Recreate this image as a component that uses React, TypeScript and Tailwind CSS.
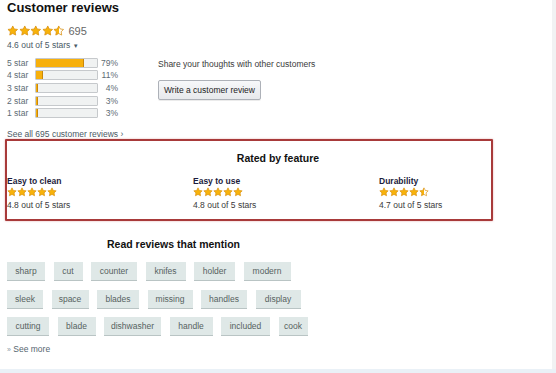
import React, { useId } from "react";

const STAR = "M12 2l3.09 6.26L22 9.27l-5 4.87 1.18 6.88L12 17.77l-6.18 3.25L7 14.14 2 9.27l6.91-1.01L12 2z";

function Star({ fill, size }: { fill: number; size: number }) {
  const id = useId();
  return (
    <svg width={size} height={size} viewBox="0 0 24 24" className="shrink-0">
      <defs>
        <linearGradient id={id} x1="0" x2="1" y1="0" y2="0">
          <stop offset={`${fill * 100}%`} stopColor="#f7b20a" />
          <stop offset={`${fill * 100}%`} stopColor="#ffffff" />
        </linearGradient>
      </defs>
      <path d={STAR} fill={`url(#${id})`} stroke="#d9900e" strokeWidth="1.6" strokeLinejoin="round" />
    </svg>
  );
}

function Stars({ value, size }: { value: number; size: number }) {
  const fills = [0, 1, 2, 3, 4].map((i) => {
    const f = value - i;
    if (f >= 0.75) return 1;
    if (f >= 0.25) return 0.5;
    return 0;
  });
  return (
    <div className="flex items-center">
      {fills.map((f, i) => (
        <Star key={i} fill={f} size={size} />
      ))}
    </div>
  );
}

const hist = [
  { label: "5 star", pct: 79 },
  { label: "4 star", pct: 11 },
  { label: "3 star", pct: 4 },
  { label: "2 star", pct: 3 },
  { label: "1 star", pct: 3 },
];

const chipRows: { t: string; w: string }[][] = [
  [
    { t: "sharp", w: "w-[38px]" },
    { t: "cut", w: "w-[29px]" },
    { t: "counter", w: "w-[46px]" },
    { t: "knifes", w: "w-[40px]" },
    { t: "holder", w: "w-[41px]" },
    { t: "modern", w: "w-[47px]" },
  ],
  [
    { t: "sleek", w: "w-[36px]" },
    { t: "space", w: "w-[37px]" },
    { t: "blades", w: "w-[42px]" },
    { t: "missing", w: "w-[45px]" },
    { t: "handles", w: "w-[46px]" },
    { t: "display", w: "w-[45px]" },
  ],
  [
    { t: "cutting", w: "w-[42px]" },
    { t: "blade", w: "w-[38px]" },
    { t: "dishwasher", w: "w-[57px]" },
    { t: "handle", w: "w-[43px]" },
    { t: "included", w: "w-[49px]" },
    { t: "cook", w: "w-[29px]" },
  ],
];

const features = [
  { name: "Easy to clean", value: 4.8 },
  { name: "Easy to use", value: 4.8 },
  { name: "Durability", value: 4.7 },
];

export default function App() {
  return (
    <div
      className="w-[556px] h-[373px] bg-white overflow-hidden flex flex-col"
      style={{ fontFamily: '"Liberation Sans", Arial, sans-serif' }}
    >
      <div className="flex flex-1 min-h-0">
        <div className="w-[552px] flex flex-col">
          {/* top section */}
          <div className="flex">
            <div className="w-[151px] pl-[7px] flex flex-col">
              <h2 className="text-[13px] leading-[16px] font-bold text-[#111111]">Customer reviews</h2>
              <div className="mt-[9px] h-[12px] flex items-center gap-[4px]">
                <Stars value={4.6} size={11.5} />
                <span className="text-[11px] leading-[12px] text-[#666666]">695</span>
              </div>
              <div className="mt-[3px] h-[10px] text-[8.5px] leading-[10px] text-[#4a5a66]">
                4.6 out of 5 stars <span className="text-[6px] align-middle">▼</span>
              </div>
              <div className="mt-[7.7px] flex flex-col gap-[2.7px]">
                {hist.map((h) => (
                  <div key={h.label} className="flex items-center h-[10px]">
                    <span className="w-[28px] text-[8.5px] leading-[10px] text-[#5d6b74]">{h.label}</span>
                    <div className="w-[63px] h-[10px] bg-[#f0f2f2] border border-[#c6c9cc] rounded-[1px] overflow-hidden">
                      <div
                        className="h-full bg-[#f7b00c] border-r border-[#c9870a]"
                        style={{ width: `${h.pct}%` }}
                      />
                    </div>
                    <span className="w-[20px] text-right text-[8.5px] leading-[10px] text-[#5d6b74]">{h.pct}%</span>
                  </div>
                ))}
              </div>
              <div className="mt-[11px] h-[10px] text-[8.5px] leading-[10px] text-[#4a5a66] whitespace-nowrap">
                See all 695 customer reviews ›
              </div>
            </div>
            <div className="pl-[7px] pt-[59px] flex flex-col items-start">
              <div className="h-[10px] text-[8.5px] leading-[10px] text-[#3a3a3a]">
                Share your thoughts with other customers
              </div>
              <button className="mt-[11px] w-[103px] h-[20px] rounded-[2px] border border-[#adb1b8] bg-gradient-to-b from-[#f7f8fa] to-[#e7e9ec] text-[8.5px] text-[#222222] shadow-[0_1px_0_rgba(0,0,0,0.08)]">
                Write a customer review
              </button>
            </div>
          </div>

          {/* rated by feature */}
          <div className="relative h-[82px] w-[556px]">
            <div className="pt-[12.5px] text-center text-[10.5px] leading-[13px] font-bold text-[#111111]">
              Rated by feature
            </div>
            <div className="mt-[11.5px] pl-[7px] grid grid-cols-[186px_186px_186px]">
              {features.map((f) => (
                <div key={f.name} className="flex flex-col">
                  <div className="h-[10px] text-[8.5px] leading-[10px] font-bold text-[#1c1c3c]">{f.name}</div>
                  <div className="mt-[1px] h-[10px] flex items-center">
                    <Stars value={f.value} size={10} />
                  </div>
                  <div className="mt-[3px] h-[10px] text-[8.5px] leading-[10px] text-[#3a3a3a]">
                    {f.value} out of 5 stars
                  </div>
                </div>
              ))}
            </div>
            <div className="absolute left-[5px] top-0 w-[488px] h-[82px] border-2 border-[#a83a3a] rounded-[1px] shadow-[0_0_2px_rgba(200,80,80,0.5)]" />
          </div>

          {/* read reviews that mention */}
          <div className="mt-[16.5px] w-[347px] text-center text-[10.5px] leading-[13px] font-bold text-[#111111]">
            Read reviews that mention
          </div>
          <div className="mt-[11.5px] pl-[7px] flex flex-col gap-[8.5px]">
            {chipRows.map((row, i) => (
              <div key={i} className="flex gap-[8.5px]">
                {row.map((c) => (
                  <div
                    key={c.t}
                    className={`${c.w} h-[19px] flex items-center justify-center bg-[#dfe8e7] border-b border-[#b9c4c4] text-[8.5px] text-[#56625f] whitespace-nowrap`}
                  >
                    {c.t}
                  </div>
                ))}
              </div>
            ))}
          </div>
          <div className="mt-[8px] pl-[7px] h-[10px] text-[8.5px] leading-[10px] text-[#56666f]">
            <span className="text-[7px] text-[#8a99a4]">»</span> See more
          </div>
        </div>
        <div className="w-[4px] bg-[#f1f2f3]" />
      </div>
      <div className="h-[4px] bg-[#eaf1f7]" />
    </div>
  );
}
